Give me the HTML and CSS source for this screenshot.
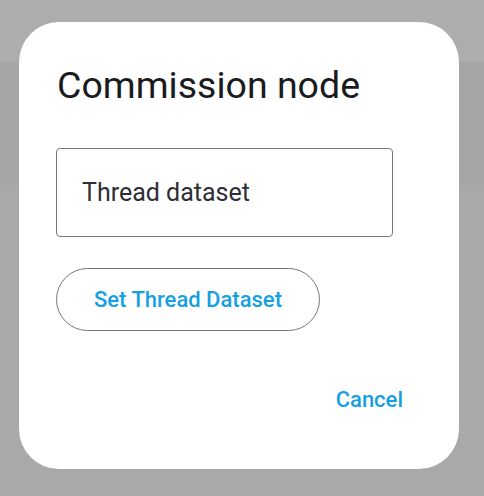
FILE: index.html
```html
<!DOCTYPE html>
<html>
<head>
<meta charset="utf-8">
<link rel="stylesheet" href="styles.css">
</head>
<body>
<div class="app">
  <div class="band band-top"></div>
  <div class="band band-mid"></div>
  <div class="band band-rest"></div>
</div>
<div class="dialog">
  <h1 class="title">Commission node</h1>
  <div class="field"><span class="field-text">Thread dataset</span></div>
  <button class="outlined">Set Thread Dataset</button>
  <div class="actions"><button class="text-btn">Cancel</button></div>
</div>
</body>
</html>
```
FILE: styles.css
```css
* { box-sizing: border-box; }
html, body { margin: 0; padding: 0; }
body {
  width: 484px;
  height: 496px;
  overflow: hidden;
  font-family: Roboto, "Noto Sans", sans-serif;
  background: #a9a9a9;
  position: relative;
}
.app { display: flex; flex-direction: column; }
.band-top { height: 62px; background: #adadad; }
.band-mid { height: 123px; background: #a6a6a6; }
.band-rest { height: 311px; background: #a9a9a9; }

.dialog {
  position: absolute;
  left: 19px;
  top: 22px;
  width: 440px;
  height: 447px;
  background: #fff;
  border-radius: 40px;
  padding: 0 37px;
  display: flex;
  flex-direction: column;
  align-items: flex-start;
}
.title {
  margin: 41px 0 0 1px;
  font-size: 37.5px;
  font-weight: 400;
  line-height: 44px;
  color: #1b1b1f;
  letter-spacing: 0;
}
.field {
  margin-top: 41px;
  width: 337px;
  height: 89px;
  border: 1px solid #7b7b7f;
  border-radius: 4px;
  display: flex;
  align-items: center;
  padding-left: 25px;
}
.field-text {
  font-size: 25px;
  line-height: 30px;
  color: #2e2e36;
}
.outlined {
  margin-top: 31px;
  width: 264px;
  height: 63px;
  border: 1px solid #76767a;
  border-radius: 32px;
  background: #fff;
  font-family: Roboto, "Noto Sans", sans-serif;
  font-size: 22px;
  font-weight: 500;
  color: #179fe4;
  padding: 0;
}
.actions {
  align-self: stretch;
  display: flex;
  justify-content: flex-end;
  margin-top: 56px;
  padding-right: 19px;
}
.text-btn {
  border: none;
  background: none;
  padding: 0;
  font-family: Roboto, "Noto Sans", sans-serif;
  font-size: 22px;
  line-height: 26px;
  font-weight: 500;
  color: #179fe4;
}
```
